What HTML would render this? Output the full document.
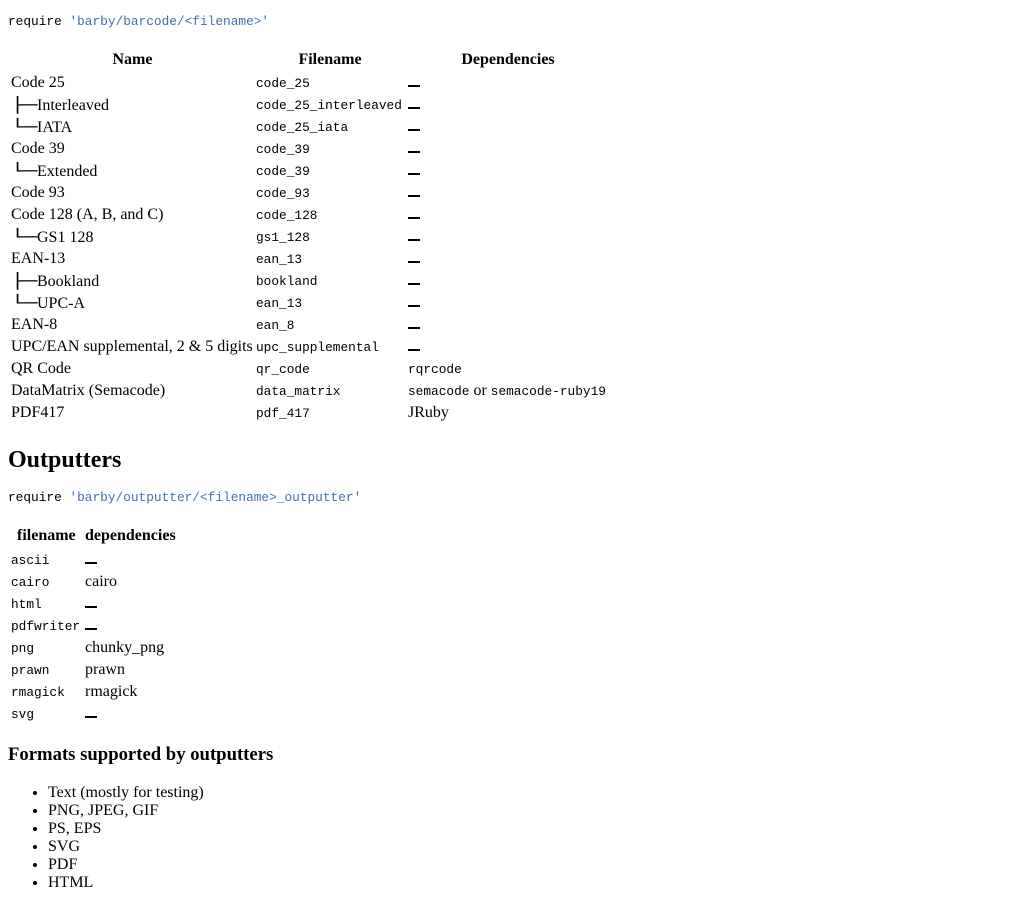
<!DOCTYPE html>
<html><head><meta charset="utf-8"><style>
body{margin:0;width:1024px;height:908px;position:relative;background:#fff;font-family:"Liberation Serif",serif;font-size:16px;color:#000;}
.a{position:absolute;white-space:nowrap;line-height:22px;height:22px;}
.m{font-family:"Liberation Mono",monospace;font-size:12.8px;}
.s{color:#4271ae;}
.b{font-weight:bold;}
.t{display:inline-block;width:26px;font-family:"DejaVu Sans Mono","Liberation Mono",monospace;font-size:15px;transform:scaleX(1.45);transform-origin:left center;}
.d{display:inline-block;width:12px;height:2px;background:#000;vertical-align:middle;margin-top:6px;}
</style></head><body>
<div class="a m" style="left:8px;top:11px">require <span class="s">'barby/barcode/&lt;filename&gt;'</span></div>

<div class="a b" style="left:11px;width:243px;top:49px;text-align:center">Name</div>
<div class="a b" style="left:256px;width:148px;top:49px;text-align:center">Filename</div>
<div class="a b" style="left:408px;width:200px;top:49px;text-align:center">Dependencies</div>

<div class="a" style="left:11px;top:72px">Code 25</div>
<div class="a" style="left:11px;top:94px"><span class="t">├─</span>Interleaved</div>
<div class="a" style="left:11px;top:116px"><span class="t">└─</span>IATA</div>
<div class="a" style="left:11px;top:138px">Code 39</div>
<div class="a" style="left:11px;top:160px"><span class="t">└─</span>Extended</div>
<div class="a" style="left:11px;top:182px">Code 93</div>
<div class="a" style="left:11px;top:204px">Code 128 (A, B, and C)</div>
<div class="a" style="left:11px;top:226px"><span class="t">└─</span>GS1 128</div>
<div class="a" style="left:11px;top:248px">EAN-13</div>
<div class="a" style="left:11px;top:270px"><span class="t">├─</span>Bookland</div>
<div class="a" style="left:11px;top:292px"><span class="t">└─</span>UPC-A</div>
<div class="a" style="left:11px;top:314px">EAN-8</div>
<div class="a" style="left:11px;top:336px">UPC/EAN supplemental, 2 &amp; 5 digits</div>
<div class="a" style="left:11px;top:358px">QR Code</div>
<div class="a" style="left:11px;top:380px">DataMatrix (Semacode)</div>
<div class="a" style="left:11px;top:402px">PDF417</div>

<div class="a m" style="left:256px;top:73px">code_25</div>
<div class="a m" style="left:256px;top:95px">code_25_interleaved</div>
<div class="a m" style="left:256px;top:117px">code_25_iata</div>
<div class="a m" style="left:256px;top:139px">code_39</div>
<div class="a m" style="left:256px;top:161px">code_39</div>
<div class="a m" style="left:256px;top:183px">code_93</div>
<div class="a m" style="left:256px;top:205px">code_128</div>
<div class="a m" style="left:256px;top:227px">gs1_128</div>
<div class="a m" style="left:256px;top:249px">ean_13</div>
<div class="a m" style="left:256px;top:271px">bookland</div>
<div class="a m" style="left:256px;top:293px">ean_13</div>
<div class="a m" style="left:256px;top:315px">ean_8</div>
<div class="a m" style="left:256px;top:337px">upc_supplemental</div>
<div class="a m" style="left:256px;top:359px">qr_code</div>
<div class="a m" style="left:256px;top:381px">data_matrix</div>
<div class="a m" style="left:256px;top:403px">pdf_417</div>

<div class="a" style="left:408px;top:72px"><span class="d"></span></div>
<div class="a" style="left:408px;top:94px"><span class="d"></span></div>
<div class="a" style="left:408px;top:116px"><span class="d"></span></div>
<div class="a" style="left:408px;top:138px"><span class="d"></span></div>
<div class="a" style="left:408px;top:160px"><span class="d"></span></div>
<div class="a" style="left:408px;top:182px"><span class="d"></span></div>
<div class="a" style="left:408px;top:204px"><span class="d"></span></div>
<div class="a" style="left:408px;top:226px"><span class="d"></span></div>
<div class="a" style="left:408px;top:248px"><span class="d"></span></div>
<div class="a" style="left:408px;top:270px"><span class="d"></span></div>
<div class="a" style="left:408px;top:292px"><span class="d"></span></div>
<div class="a" style="left:408px;top:314px"><span class="d"></span></div>
<div class="a" style="left:408px;top:336px"><span class="d"></span></div>
<div class="a m" style="left:408px;top:359px">rqrcode</div>
<div class="a" style="left:408px;top:380px"><span class="m">semacode</span> or <span class="m">semacode-ruby19</span></div>
<div class="a" style="left:408px;top:402px">JRuby</div>

<div class="a b" style="left:8px;top:444px;font-size:24px;line-height:32px;height:32px">Outputters</div>
<div class="a m" style="left:8px;top:487px">require <span class="s">'barby/outputter/&lt;filename&gt;_outputter'</span></div>

<div class="a b" style="left:17px;top:525px">filename</div>
<div class="a b" style="left:85px;top:525px">dependencies</div>
<div class="a m" style="left:11px;top:550px">ascii</div>
<div class="a m" style="left:11px;top:572px">cairo</div>
<div class="a m" style="left:11px;top:594px">html</div>
<div class="a m" style="left:11px;top:616px">pdfwriter</div>
<div class="a m" style="left:11px;top:638px">png</div>
<div class="a m" style="left:11px;top:660px">prawn</div>
<div class="a m" style="left:11px;top:682px">rmagick</div>
<div class="a m" style="left:11px;top:704px">svg</div>
<div class="a" style="left:85px;top:549px"><span class="d"></span></div>
<div class="a" style="left:85px;top:571px">cairo</div>
<div class="a" style="left:85px;top:593px"><span class="d"></span></div>
<div class="a" style="left:85px;top:615px"><span class="d"></span></div>
<div class="a" style="left:85px;top:637px">chunky_png</div>
<div class="a" style="left:85px;top:659px">prawn</div>
<div class="a" style="left:85px;top:681px">rmagick</div>
<div class="a" style="left:85px;top:703px"><span class="d"></span></div>

<div class="a b" style="left:8px;top:744px;font-size:18.7px">Formats supported by outputters</div>
<ul style="position:absolute;left:8px;top:784px;margin:0;padding-left:40px;line-height:18px">
<li>Text (mostly for testing)</li>
<li>PNG, JPEG, GIF</li>
<li>PS, EPS</li>
<li>SVG</li>
<li>PDF</li>
<li>HTML</li>
</ul>
</body></html>
